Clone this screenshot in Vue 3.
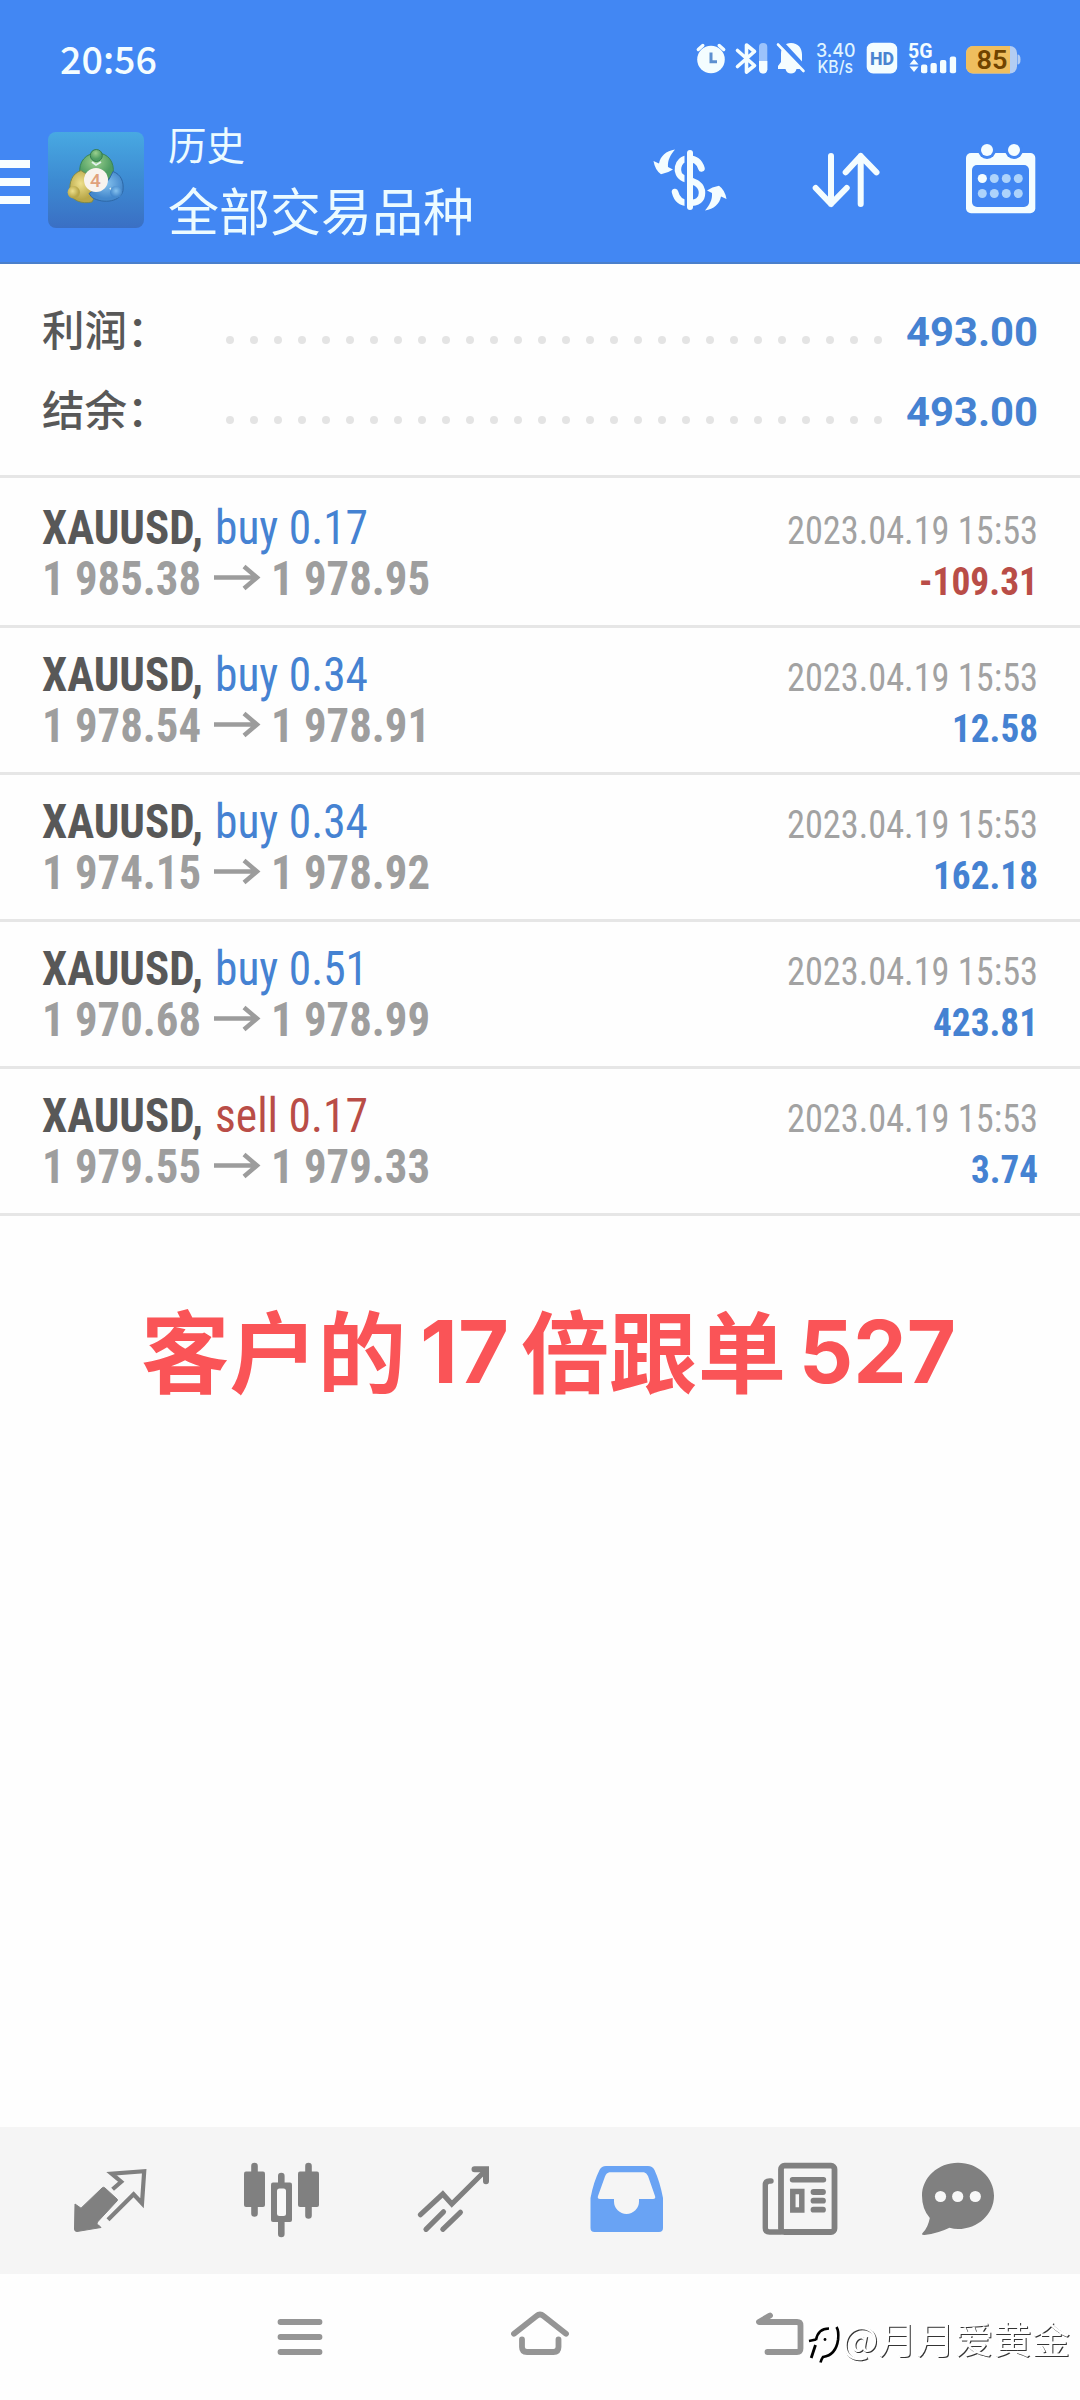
<script setup>
import { h } from 'vue'

// Single line of text set to an exact advance width.
const FitText = (props) =>
  h('svg', { class: 'fit', width: props.w, height: props.lh, style: { fontSize: props.size + 'px' } }, [
    h('text', { x: 0, y: props.base, textLength: props.w, lengthAdjust: 'spacingAndGlyphs' }, props.t),
  ])
FitText.props = ['t', 'w', 'lh', 'base', 'size']

const totals = [
  { label: '利润：', value: '493.00' },
  { label: '结余：', value: '493.00' },
]

const deals = [
  { side: 'buy', lot: '0.17', sw: 151, open: '1 985.38', close: '1 978.95', profit: '-109.31', pw: 119 },
  { side: 'buy', lot: '0.34', sw: 151, open: '1 978.54', close: '1 978.91', profit: '12.58', pw: 86 },
  { side: 'buy', lot: '0.34', sw: 151, open: '1 974.15', close: '1 978.92', profit: '162.18', pw: 105 },
  { side: 'buy', lot: '0.51', sw: 151, open: '1 970.68', close: '1 978.99', profit: '423.81', pw: 105 },
  { side: 'sell', lot: '0.17', sw: 151, open: '1 979.55', close: '1 979.33', profit: '3.74', pw: 67 },
]
</script>

<template>
  <div class="screen">
    <header class="header">
      <div class="status">
        <FitText class="clock" t="20:56" :w="97" :lh="80" :base="74" :size="37.5" />
        <div class="status-icons">
          <svg width="34" height="80" viewBox="694 0 34 80">
            <circle cx="711" cy="59.500" r="13.800" fill="#f4fdff" />
            <path d="M698.300 49.500l4.500-4M719.200 45.500l4.500 4" stroke="#f4fdff" stroke-width="3.400" stroke-linecap="round" />
            <path d="M711 52.500v9.200h6" fill="none" stroke="#5d8fd0" stroke-width="3" />
          </svg>
          <svg width="45" height="80" viewBox="728 0 45 80">
            <path d="M737.500 50.500l17 15-8 6.500v-27l8 6.500-17 15" fill="none" stroke="#f4fdff" stroke-width="3.600" stroke-linejoin="round" stroke-linecap="round" />
            <rect x="759" y="43" width="8.300" height="30.500" rx="4.100" fill="#9cc3fb" />
            <path d="M759 61h8.300v8.300a4.150 4.150 0 0 1-8.300 0z" fill="#f4fdff" />
          </svg>
          <svg width="40" height="80" viewBox="773 0 40 80">
            <path d="M791 43c7 0 11 5 11 11.500V63l2 6h-7.500c-1 6-10 6-11 0H778v-3l3-4v-8c0-7 4-11 10-11z" fill="#f4fdff" />
            <path d="M781 42.500l25 27" stroke="#4287f3" stroke-width="5" />
            <path d="M778 44.500l25.500 26.500" stroke="#f4fdff" stroke-width="2.600" stroke-linecap="round" />
          </svg>
          <svg width="48" height="80" viewBox="813 0 48 80" class="net">
            <text x="816" y="57" font-size="18.500" textLength="39.500" lengthAdjust="spacingAndGlyphs">3.40</text>
            <text x="817.500" y="73" font-size="17" textLength="35.500" lengthAdjust="spacingAndGlyphs">KB/s</text>
          </svg>
          <svg width="42" height="80" viewBox="861 0 42 80">
            <rect x="866.700" y="42.700" width="30.500" height="30.700" rx="6.500" fill="#f4fdff" />
            <text x="870" y="64.800" font-size="18.500" font-weight="800" textLength="24" lengthAdjust="spacingAndGlyphs" fill="#4a84d0">HD</text>
          </svg>
          <svg width="58" height="80" viewBox="903 0 58 80">
            <text x="908" y="57.500" font-size="20" font-weight="700" textLength="24.500" lengthAdjust="spacingAndGlyphs" fill="#f4fdff">5G</text>
            <path d="M909.500 64.500l4.500-5.500 4.500 5.500zM909.500 66.500h9l-4.500 5.500z" fill="#f4fdff" />
            <g fill="#f4fdff">
              <rect x="921" y="64.500" width="6.300" height="8.700" rx="2" />
              <rect x="930.500" y="63" width="6.300" height="10.200" rx="2" />
              <rect x="940" y="60" width="6.300" height="13.200" rx="2" />
              <rect x="949.800" y="56.500" width="6.300" height="16.700" rx="2" />
            </g>
          </svg>
          <svg width="119" height="80" viewBox="961 0 119 80">
            <rect x="966" y="46" width="51" height="27.500" rx="7" fill="#b3cdf2" />
            <path d="M1017.500 54.500q3 0 3 5t-3 5z" fill="#b3cdf2" />
            <path d="M973 46h37v27.500h-37a7 7 0 0 1-7-7v-13.500a7 7 0 0 1 7-7z" fill="#efbe5e" />
            <text x="976.500" y="69" font-size="25.500" font-weight="600" textLength="31" lengthAdjust="spacingAndGlyphs" fill="#704400">85</text>
          </svg>
        </div>
      </div>

      <div class="toolbar">
        <svg class="burger" width="48" height="183" viewBox="0 80 48 183">
          <path d="M0 164h30M0 182h30M0 200h30" stroke="#f8feff" stroke-width="8" />
        </svg>
        <svg width="96" height="183" viewBox="48 80 96 183">
          <defs>
            <linearGradient id="tile" x1="0" y1="0" x2="0" y2="1">
              <stop offset="0" stop-color="#48a9e2" />
              <stop offset=".5" stop-color="#3d8bd2" />
              <stop offset="1" stop-color="#3a6fc4" />
            </linearGradient>
            <radialGradient id="gr" cx=".45" cy=".3"><stop offset="0" stop-color="#9bd08e" /><stop offset="1" stop-color="#4f9d62" /></radialGradient>
            <radialGradient id="ye" cx=".4" cy=".4"><stop offset="0" stop-color="#eee08c" /><stop offset="1" stop-color="#b9a748" /></radialGradient>
            <radialGradient id="bl" cx=".5" cy=".4"><stop offset="0" stop-color="#86c2ee" /><stop offset="1" stop-color="#4488cc" /></radialGradient>
          </defs>
          <rect x="48" y="132" width="96" height="96" rx="8" fill="url(#tile)" />
          <path d="M80 174c-2-12 6-21 17-21s18 9 16 21l-7 8H86z" fill="url(#gr)" stroke="#38835a" />
          <path d="M81 170.500c-9 3-12 12-11 21 1 9 12 13 22 10.500l5-9-9-18z" fill="url(#ye)" stroke="#7d8a4c" />
          <path d="M113 171.500c8 3 11 10 10 19-2 11-19 14-31 7l-3-4 20-14z" fill="url(#bl)" stroke="#2e68a6" />
          <path d="M92 162l4 3 5-3M110 188l2.500 3.500 4-4" fill="none" stroke="#e4f2ee" stroke-width="1.800" />
          <circle cx="96.300" cy="155.500" r="6" fill="url(#gr)" stroke="#357c4e" />
          <circle cx="73.800" cy="192.300" r="6.200" fill="url(#ye)" />
          <circle cx="116" cy="192" r="6" fill="url(#bl)" />
          <circle cx="96" cy="180" r="12" fill="#f8f3ee" />
          <text x="95.500" y="187" text-anchor="middle" font-size="19" font-weight="500" fill="#e0a27c">4</text>
        </svg>
        <div class="titles">
          <FitText t="历史" :w="77" :lh="48" :base="40.5" :size="38.5" />
          <FitText t="全部交易品种" :w="306" :lh="62" :base="64" :size="51" />
        </div>
        <svg width="110" height="183" viewBox="640 80 110 183">
          <path d="M701.500 168.500C699 160 693 158.500 688 158.500C677 159 674 174 684 178.500C691 181.500 702 182 702 193C702 201 696 203 688 203C680 203 676.500 198 675 192" fill="none" stroke="#f4fdff" stroke-width="6.500" stroke-linecap="round" />
          <path d="M687 152v56" stroke="#4287f3" stroke-width="5" />
          <path d="M690 153v54" stroke="#f4fdff" stroke-width="6" stroke-linecap="round" />
          <path id="swap" d="M675 149.500C666 151 660.500 156 659 163.500L653.500 161Q655 170 661 174.300Q668 173 673 169.500L668 167C667.500 160 670.500 155 675 149.500z" fill="#f4fdff" />
          <use href="#swap" transform="rotate(180 690 180)" />
        </svg>
        <svg width="170" height="183" viewBox="750 80 170 183">
          <path d="M831 156v48M815.700 188L831 204 846.700 188M860.700 204V156M845.700 172.300L860.700 156 876.500 172.300" fill="none" stroke="#f4fdff" stroke-width="6" stroke-linecap="round" stroke-linejoin="round" />
        </svg>
        <svg width="160" height="183" viewBox="920 80 160 183">
          <rect x="966" y="153" width="69.300" height="60.300" rx="5" fill="#f4fdff" />
          <rect x="972" y="165" width="57" height="42" rx="5" fill="#4287f3" />
          <g fill="#4287f3"><circle cx="987" cy="150" r="9" /><circle cx="1014" cy="150" r="9" /></g>
          <g fill="#f4fdff"><circle cx="987" cy="150" r="6" /><circle cx="1014" cy="150" r="6" /><circle cx="982.300" cy="178.500" r="4.600" /></g>
          <g fill="#add3fb">
            <circle cx="994.300" cy="178.500" r="4.500" /><circle cx="1006.300" cy="178.500" r="4.500" /><circle cx="1018.300" cy="178.500" r="4.500" />
            <circle cx="982.300" cy="193.500" r="4.500" /><circle cx="994.300" cy="193.500" r="4.500" /><circle cx="1006.300" cy="193.500" r="4.500" /><circle cx="1018.300" cy="193.500" r="4.500" />
          </g>
        </svg>
      </div>
    </header>

    <section class="totals">
      <div v-for="row in totals" :key="row.label" class="total">
        <FitText class="label" :t="row.label" :w="127.5" :lh="80" :base="52" :size="42.5" />
        <div class="dots"><i v-for="n in 28" :key="n"></i></div>
        <FitText class="sum" :t="row.value" :w="132" :lh="80" :base="52" :size="41.3" />
      </div>
    </section>

    <section class="deals">
      <article v-for="(d, i) in deals" :key="i" class="deal">
        <div class="left">
          <div class="line">
            <FitText class="symbol" t="XAUUSD," :w="161" :lh="51" :base="51" :size="48" />
            <FitText class="side" :class="d.side" :t="d.side + ' ' + d.lot" :w="d.sw + 2" :lh="51" :base="51" :size="48" />
          </div>
          <div class="line price">
            <FitText :t="d.open" :w="159" :lh="51" :base="51" :size="48" />
            <svg class="arrow" width="46" height="51" viewBox="0 0 46 51">
              <path d="M0 32.500h43M30 21.500l13 11-13 11" fill="none" stroke="#9c9c9c" stroke-width="4.500" />
            </svg>
            <FitText :t="d.close" :w="159" :lh="51" :base="51" :size="48" />
          </div>
        </div>
        <div class="right">
          <FitText class="time" t="2023.04.19 15:53" :w="251" :lh="51" :base="51" :size="39" />
          <FitText class="profit" :class="d.profit[0] === '-' ? 'sell' : 'buy'" :t="d.profit" :w="d.pw" :lh="51" :base="51" :size="39" />
        </div>
      </article>
    </section>

    <div class="caption">
      <FitText t="客户的" :w="265" :lh="110" :base="86" :size="88.3" />
      <FitText class="num n17" t="17" :w="89" :lh="110" :base="83" :size="87" />
      <FitText t="倍跟单" :w="265" :lh="110" :base="86" :size="88.3" />
      <FitText class="num n527" t="527" :w="157" :lh="110" :base="83" :size="87" />
    </div>

    <nav class="tabs">
      <svg viewBox="0 17 180 147">
        <path d="M75 94l6 4.200L102 78q1.500-1.500 3 0l12 11q1 1 0 2L97.500 112q-1.500 2 1 3l2.500 2.500L77 121.500q-2.500 0-2.500-2.500z" fill="#808080" stroke="#808080" stroke-linejoin="round" />
        <path d="M112.600 79.300L121.200 71.700 111.600 63.700 144.200 61.200 142 93.300 133.600 84.300 108 109.800" fill="none" stroke="#808080" stroke-width="4.200" />
      </svg>
      <svg viewBox="180 17 180 147">
        <path d="M254.500 56v47.500M281.300 66v58M308.500 56v49.500" stroke="#808080" stroke-width="6.600" stroke-linecap="round" />
        <g fill="#808080"><rect x="244" y="61.500" width="21" height="35.500" rx="2" /><rect x="271" y="72.500" width="21" height="39.500" rx="2" /><rect x="298" y="61.500" width="21" height="35.500" rx="2" /></g>
        <rect x="277" y="78.500" width="9" height="27.500" rx="2.500" fill="#f8f8f8" />
      </svg>
      <svg viewBox="360 17 180 147" class="stroke">
        <path d="M420.500 104.700L442.800 84 451.800 94 485 61M426 119.300l17.500-17.500M442.800 119.300l17.600-17" stroke-width="5.200" />
        <path d="M474.500 59.300h11.500v12" stroke-width="6" />
      </svg>
      <svg viewBox="540 17 180 147">
        <path fill-rule="evenodd" d="M606 56h42q4.500 0 6.500 4 5.500 12 8.500 28v30q0 4-4 4h-64.500q-4 0-4-4V88q3-16 9-28 2-4 6.500-4zM609.500 62.300q-3 .5-4.500 4.200L598 86q-1 3 2 3h14v2.500a12.500 12.500 0 0 0 25 0V89h14q3 0 2-3l-7-20q-1.500-3.200-4-3.700z" fill="#69a3f4" />
      </svg>
      <svg viewBox="720 17 180 147" class="stroke">
        <rect x="781" y="55.700" width="53.500" height="66.300" rx="3.500" stroke-width="5.800" />
        <path d="M771 71h-1.500q-4.200 0-4.200 4.200V118q0 4 4.200 4H781M792.500 69.700h31" stroke-width="5.400" />
        <rect x="792.800" y="81.500" width="9" height="18.500" stroke-width="5.500" />
        <path d="M813.500 82h9.500M813.500 90.700h9.500M813.500 99.700h9.500" stroke-width="5.800" />
      </svg>
      <svg viewBox="900 17 180 147">
        <path d="M958 52.700c20 0 36 14.800 36 33s-16 33.300-36 33.300q-4 0-8.500-1.200Q938 123.500 924.500 125q-4 .2-1.500-2.500 5-5 6.800-14.500-7.800-9-7.800-22.300c0-18.200 16-33 36-33z" fill="#808080" />
        <g fill="#f8f8f8"><circle cx="940.500" cy="86.500" r="5.600" /><circle cx="957.700" cy="86.500" r="5.600" /><circle cx="975.300" cy="86.500" r="5.600" /></g>
      </svg>
    </nav>

    <footer class="sysnav">
      <svg viewBox="0 164 1080 126" width="1080" height="126">
        <path d="M280.500 212h39M280.500 227h39M280.500 242h39M514 223.800L536.500 206q3.500-3 7 0L566 223.800M522 229.500V237q0 5 5 5h26.500q5 0 5-5v-7.500M770 205.500L759 212H797q3.500 0 3.500 3.500v23q0 3.500-3.500 3.500H767.500" fill="none" stroke="#959595" stroke-width="5.800" stroke-linecap="round" stroke-linejoin="round" />
      </svg>
      <div class="mark">
        <svg width="36" height="48" viewBox="806 207 36 48">
          <path d="M807 231l7-3q3-13 15-13.500q10 1 9 15q-1 15-17 21" fill="none" stroke="#fff" stroke-width="3" />
          <path d="M809 231l7-1.500M816 230Q818 218.500 829 218.500" fill="none" stroke="#000" stroke-width="2.600" />
          <path d="M815.500 235l-4.300 13" fill="none" stroke="#000" stroke-width="2.800" />
          <path d="M836.500 217q2.500 4 1.600 12.500Q836 245 823 247q-1.500 2-2.500 5.500" fill="none" stroke="#000" stroke-width="2.600" />
          <circle cx="825" cy="229.500" r="1.400" />
        </svg>
        <FitText class="mark-text" t="@月月爱黄金" :w="228" :lh="48" :base="36.5" :size="37" />
      </div>
    </footer>
  </div>
</template>

<style>
body { margin: 0; }
</style>

<style scoped>
.screen {
  width: 1080px;
  height: 2400px;
  display: flex;
  flex-direction: column;
  background: #fefefe;
  overflow: hidden;
  font-family: Roboto, "Noto Sans CJK SC", sans-serif;
}
svg { display: block; flex: none; overflow: visible; }
.header {
  box-sizing: border-box;
  height: 264px;
  background: #4287f3;
  border-bottom: 2px solid #4a7fcb;
  overflow: hidden;
}
.status { display: flex; justify-content: space-between; height: 80px; }
.clock { margin-left: 60px; font-family: "Noto Sans CJK SC", sans-serif; fill: #f4fdff; font-weight: 500; }
.status-icons { display: flex; }
.net { fill: #dff4ff; font-family: Inter, sans-serif; font-weight: 500; }
.toolbar { display: flex; height: 183px; }
.titles { display: flex; flex-direction: column; width: 472px; margin-left: 24px; padding-top: 39px; box-sizing: border-box; fill: #ecfbff; font-family: "Noto Sans CJK SC", sans-serif; }
.totals { box-sizing: border-box; height: 211px; padding-top: 30px; }
.total { display: flex; height: 80px; padding: 0 42px 0 42px; }
.label { fill: #585858; font-family: "Noto Sans CJK SC", sans-serif; font-weight: 500; }
.dots { display: flex; gap: 16px; margin: 42px auto 0 56.5px; }
.dots i { width: 8px; height: 8px; border-radius: 50%; background: #e4e4e4; }
.sum { fill: #4582d2; font-weight: 700; font-family: Roboto, sans-serif; }
.deals { border-top: 3px solid #e6e6e6; padding-top: 3px; font-family: "Roboto Condensed", Roboto, sans-serif; font-stretch: 75%; }
.deal { box-sizing: border-box; height: 147px; display: flex; justify-content: space-between; padding: 12px 42px 0; border-bottom: 3px solid #e6e6e6; }
.line { display: flex; }
.symbol { fill: #585858; font-weight: 700; }
.side { margin-left: 12px; }
.price { fill: #9e9e9e; font-weight: 700; }
.arrow { margin: 1px 11px 0 12.5px; }
.buy { fill: #4582d2; }
.sell { fill: #b94d47; }
.right { display: flex; flex-direction: column; align-items: flex-end; }
.time { fill: #a2a2a2; }
.profit { font-weight: 700; }
.caption { display: flex; height: 827px; margin-top: 84px; padding-left: 141px; fill: #fa5457; font-family: "Noto Sans CJK SC", sans-serif; font-weight: 700; }
.num { font-family: Inter, sans-serif; font-weight: 700; }
.n17 { margin: 0 12px 0 14px; }
.n527 { margin-left: 13px; }
.tabs { display: flex; height: 147px; background: #f5f5f5; }
.tabs svg { width: 180px; height: 147px; }
.stroke { fill: none; stroke: #808080; stroke-linecap: round; stroke-linejoin: miter; }
.sysnav { position: relative; height: 126px; }
.mark { position: absolute; left: 806px; top: 43px; display: flex; }
.mark-text { fill: #fff; font-family: "Noto Sans CJK SC", sans-serif; filter: drop-shadow(1px 1px 0 #333); }
</style>
